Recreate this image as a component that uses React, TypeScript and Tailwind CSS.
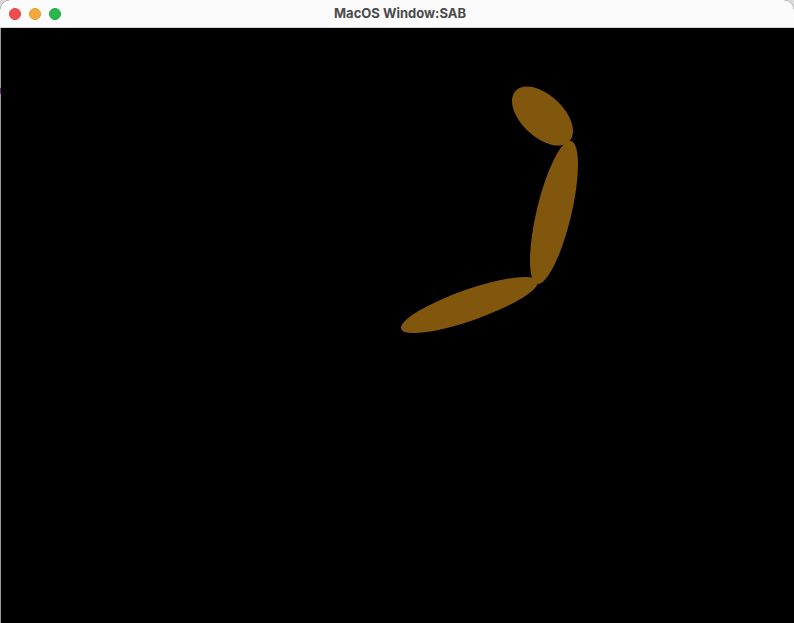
import React from "react";

export default function App() {
  return (
    <div className="w-[794px] h-[623px] bg-[#d9d9dc] overflow-hidden">
      <div className="w-full h-full flex flex-col rounded-t-[10px] overflow-hidden bg-black">
        <div className="h-[28px] shrink-0 bg-[#fbfbfb] flex items-center relative border-b border-[#d8d8d8]">
          <div className="flex items-center gap-[8px] pl-[9px]">
            <span className="block w-[12px] h-[12px] rounded-full bg-[#f04b4f] border border-[#e0443e]" />
            <span className="block w-[12px] h-[12px] rounded-full bg-[#f6a93b] border border-[#e09a30]" />
            <span className="block w-[12px] h-[12px] rounded-full bg-[#2bb84b] border border-[#24a640]" />
          </div>
          <div
            className="absolute inset-0 pl-[6px] flex items-center justify-center text-[13px] font-bold text-[#4a4a4a] pointer-events-none"
            style={{ fontFamily: "Inter, 'Liberation Sans', sans-serif" }}
          >
            MacOS Window:SAB
          </div>
        </div>
        <div className="flex-1 bg-black border-l border-[#9a9a9a] relative">
          <svg
            className="block absolute left-[-1px] top-0"
            width={794}
            height={595}
            viewBox="0 28 794 595"
          >
            <rect x="0" y="88" width="1" height="6" fill="#7a1f7a" />
            <ellipse cx="542.5" cy="116" rx="36.9" ry="21" fill="#80570d" transform="rotate(43.1 542.5 116)" />
            <ellipse cx="554" cy="212.5" rx="17.4" ry="73.4" fill="#80570d" transform="rotate(13.4 554 212.5)" />
            <ellipse cx="469.5" cy="305" rx="72.4" ry="15.5" fill="#80570d" transform="rotate(-19.3 469.5 305)" />
          </svg>
        </div>
      </div>
    </div>
  );
}
